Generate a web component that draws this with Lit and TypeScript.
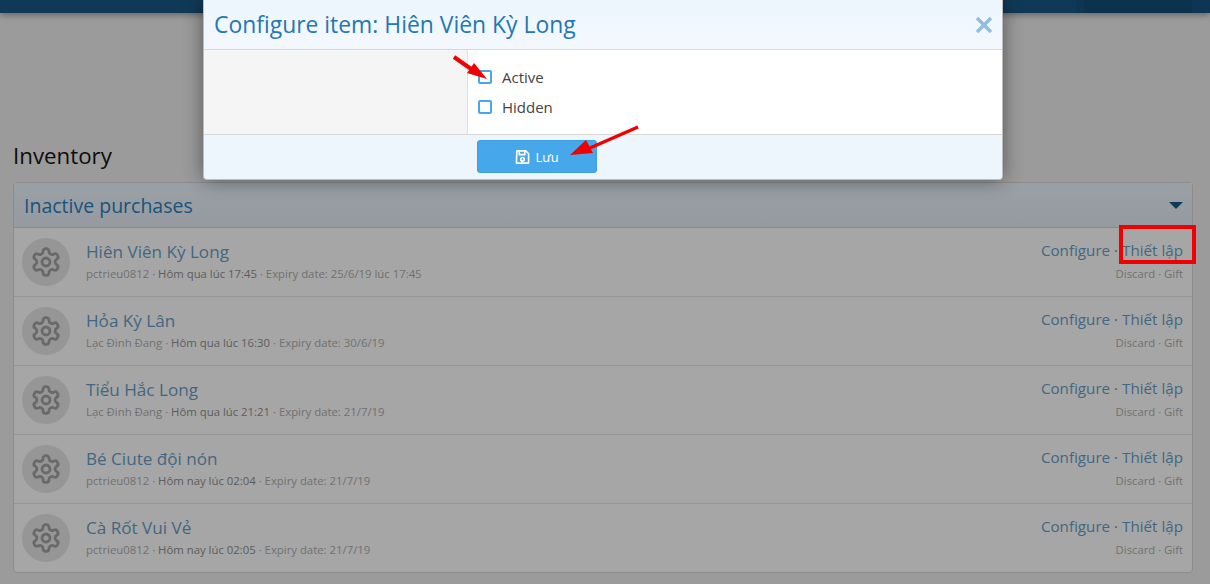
import { LitElement, html, css, svg } from 'lit';
import { customElement } from 'lit/decorators.js';

const gear = html`<svg class="gear" viewBox="0 0 24 24" fill="none" stroke="currentColor" stroke-width="2.1" stroke-linejoin="round">
  <path d="M12.22 2h-.44a2 2 0 0 0-2 2v.18a2 2 0 0 1-1 1.73l-.43.25a2 2 0 0 1-2 0l-.15-.08a2 2 0 0 0-2.73.73l-.22.38a2 2 0 0 0 .73 2.73l.15.1a2 2 0 0 1 1 1.72v.51a2 2 0 0 1-1 1.74l-.15.09a2 2 0 0 0-.73 2.73l.22.38a2 2 0 0 0 2.73.73l.15-.08a2 2 0 0 1 2 0l.43.25a2 2 0 0 1 1 1.73V20a2 2 0 0 0 2 2h.44a2 2 0 0 0 2-2v-.18a2 2 0 0 1 1-1.73l.43-.25a2 2 0 0 1 2 0l.15.08a2 2 0 0 0 2.73-.73l.22-.39a2 2 0 0 0-.73-2.73l-.15-.08a2 2 0 0 1-1-1.74v-.5a2 2 0 0 1 1-1.74l.15-.09a2 2 0 0 0 .73-2.73l-.22-.38a2 2 0 0 0-2.73-.73l-.15.08a2 2 0 0 1-2 0l-.43-.25a2 2 0 0 1-1-1.73V4a2 2 0 0 0-2-2z"/>
  <circle cx="12" cy="12" r="3"/>
</svg>`;

const items = [
  { name: 'Hiên Viên Kỳ Long', user: 'pctrieu0812', date: 'Hôm qua lúc 17:45', expiry: '25/6/19 lúc 17:45' },
  { name: 'Hỏa Kỳ Lân', user: 'Lạc Đinh Đang', date: 'Hôm qua lúc 16:30', expiry: '30/6/19' },
  { name: 'Tiểu Hắc Long', user: 'Lạc Đinh Đang', date: 'Hôm qua lúc 21:21', expiry: '21/7/19' },
  { name: 'Bé Ciute đội nón', user: 'pctrieu0812', date: 'Hôm nay lúc 02:04', expiry: '21/7/19' },
  { name: 'Cà Rốt Vui Vẻ', user: 'pctrieu0812', date: 'Hôm nay lúc 02:05', expiry: '21/7/19' },
];

@customElement('app-root')
export class AppRoot extends LitElement {
  static styles = css`
    :host {
      display: block;
      font-family: 'Open Sans', 'Noto Sans', sans-serif;
    }
    a { color: #2577b1; text-decoration: none; }

    .page {
      position: relative;
      height: 584px;
      overflow: hidden;
      background: #eeeeee;
      color: #141414;
    }
    .topbar {
      display: flex;
      height: 13px;
      background: #1a5886;
      box-shadow: 0 2px 6px rgba(0, 0, 0, 0.35);
    }
    .bar-fill { width: 1076px; }
    .bar-tab { width: 8px; background: #175282; }
    .bar-dark { width: 108px; background: #154d78; }
    .bar-end { flex: 1; background: #175282; }
    .content { padding: 129px 17px 0 13px; }
    h1 {
      margin: 0 0 13px;
      font-size: 22.3px;
      line-height: 27px;
      font-weight: 400;
    }
    .block {
      height: 389px;
      border: 1px solid #d8d8d8;
      border-radius: 4px;
      background: #fff;
    }
    .block-head {
      display: flex;
      align-items: center;
      justify-content: space-between;
      height: 44px;
      padding: 0 9px 0 10px;
      border-bottom: 1px solid #d8d8d8;
      background: linear-gradient(#edf6fd, #e4eef6);
      font-size: 19.5px;
      color: #2a80c0;
    }
    .caret {
      width: 0;
      height: 0;
      border-left: 7px solid transparent;
      border-right: 7px solid transparent;
      border-top: 7px solid #185886;
    }
    .row {
      display: flex;
      align-items: center;
      height: 68px;
      padding: 0 9px 0 8px;
      border-bottom: 1px solid #e5e5e5;
    }
    .row:last-child { border-bottom: 0; }
    .row > * { opacity: 0.7; }
    .avatar {
      display: flex;
      align-items: center;
      justify-content: center;
      flex: none;
      width: 48px;
      height: 48px;
      border-radius: 50%;
      background: #dcdcdc;
      color: #7a7a7a;
      margin-right: 16px;
    }
    .gear { width: 32px; height: 32px; }
    .main { flex: 1; margin-top: -3px; }
    .name { font-size: 17.1px; line-height: 23px; }
    .meta { margin-top: 3px; font-size: 11.35px; line-height: 15px; color: #8c8c8c; }
    .meta b { font-weight: 400; color: #606060; }
    .actions { text-align: right; margin-top: -4px; }
    .links { font-size: 15.2px; line-height: 22px; color: #505050; }
    .minor { margin-top: 5px; font-size: 11.3px; line-height: 15px; color: #8c8c8c; }

    .backdrop {
      position: absolute;
      inset: 0;
      background: rgba(0, 0, 0, 0.35);
    }
    .modal {
      position: absolute;
      left: 203px;
      top: 0;
      width: 800px;
      height: 180px;
      box-sizing: border-box;
      display: flex;
      flex-direction: column;
      background: #edf6fd;
      border: 1px solid #bdbdbd;
      border-top: 0;
      border-radius: 0 0 4px 4px;
      box-shadow: 0 0 20px rgba(0, 0, 0, 0.45);
      overflow: hidden;
    }
    .modal-head {
      display: flex;
      align-items: center;
      justify-content: space-between;
      height: 49px;
      padding: 0 8px 0 10px;
      border-bottom: 1px solid #d8d8d8;
      background: linear-gradient(#edf6fd, #f3f8fe);
      font-size: 22.9px;
      color: #2577b1;
    }
    .close { width: 20px; height: 20px; color: #8fbfe0; }
    .modal-body {
      display: flex;
      height: 84px;
      border-bottom: 1px solid #d8d8d8;
      background: #fff;
    }
    .side {
      width: 263px;
      background: #f5f5f5;
      border-right: 1px solid #e0e0e0;
    }
    .checks {
      display: flex;
      flex-direction: column;
      gap: 10px;
      padding: 17px 0 0 10px;
    }
    .check {
      display: flex;
      align-items: center;
      gap: 10px;
      font-size: 15px;
      line-height: 20px;
      color: #444;
    }
    .box {
      box-sizing: border-box;
      width: 14px;
      height: 14px;
      border: 2px solid #47a7eb;
      border-radius: 2px;
      background: #fff;
    }
    .modal-foot { flex: 1; padding: 5px 0 0 273px; }
    .save {
      display: flex;
      align-items: center;
      justify-content: center;
      gap: 5px;
      box-sizing: border-box;
      width: 120px;
      height: 33px;
      border: 1px solid #3f9ee0;
      border-radius: 3px;
      background: #47a7eb;
      color: #fff;
      font-size: 12.8px;
      font-weight: 500;
    }
    .save svg { width: 15px; height: 16px; }

    .marks {
      position: absolute;
      left: 0;
      top: 0;
      pointer-events: none;
    }
  `;

  render() {
    return html`
      <div class="page">
        <div class="topbar">
          <div class="bar-fill"></div>
          <div class="bar-tab"></div>
          <div class="bar-dark"></div>
          <div class="bar-end"></div>
        </div>
        <div class="content">
          <h1>Inventory</h1>
          <div class="block">
            <div class="block-head"><span>Inactive purchases</span><span class="caret"></span></div>
            ${items.map(
              (it) => html`
                <div class="row">
                  <div class="avatar">${gear}</div>
                  <div class="main">
                    <div class="name"><a>${it.name}</a></div>
                    <div class="meta">${it.user} · <b>${it.date}</b> · Expiry date: ${it.expiry}</div>
                  </div>
                  <div class="actions">
                    <div class="links"><a>Configure</a> · <a>Thiết lập</a></div>
                    <div class="minor">Discard · Gift</div>
                  </div>
                </div>
              `
            )}
          </div>
        </div>
        <div class="backdrop"></div>
        <div class="modal">
          <div class="modal-head">
            <span>Configure item: Hiên Viên Kỳ Long</span>
            <svg class="close" viewBox="0 0 20 20" fill="none" stroke="currentColor" stroke-width="3.4">
              <path d="M3 3l14 14M17 3L3 17" />
            </svg>
          </div>
          <div class="modal-body">
            <div class="side"></div>
            <div class="checks">
              <div class="check"><span class="box"></span>Active</div>
              <div class="check"><span class="box"></span>Hidden</div>
            </div>
          </div>
          <div class="modal-foot">
            <div class="save">
              <svg viewBox="0 0 16 16" fill="none" stroke="currentColor" stroke-width="1.7" stroke-linejoin="round">
                <path d="M2 1.5h9.5l3 3v10h-13z" />
                <path d="M4.5 2v3.5h6V2" />
                <circle cx="8" cy="10.5" r="1.9" />
              </svg>
              <span>Lưu</span>
            </div>
          </div>
        </div>
        <svg class="marks" width="1210" height="584">
          ${svg`
            <path d="M454 57L474 71" stroke="#f00000" stroke-width="4" fill="none" />
            <path d="M487 79L467 73L474 63Z" fill="#f00000" />
            <path d="M638 127L590 148" stroke="#f00000" stroke-width="3.5" fill="none" />
            <path d="M570 155L586 140L593 153Z" fill="#f00000" />
            <rect x="1121" y="227" width="73" height="35" fill="none" stroke="#f00000" stroke-width="4" />
          `}
        </svg>
      </div>
    `;
  }
}
